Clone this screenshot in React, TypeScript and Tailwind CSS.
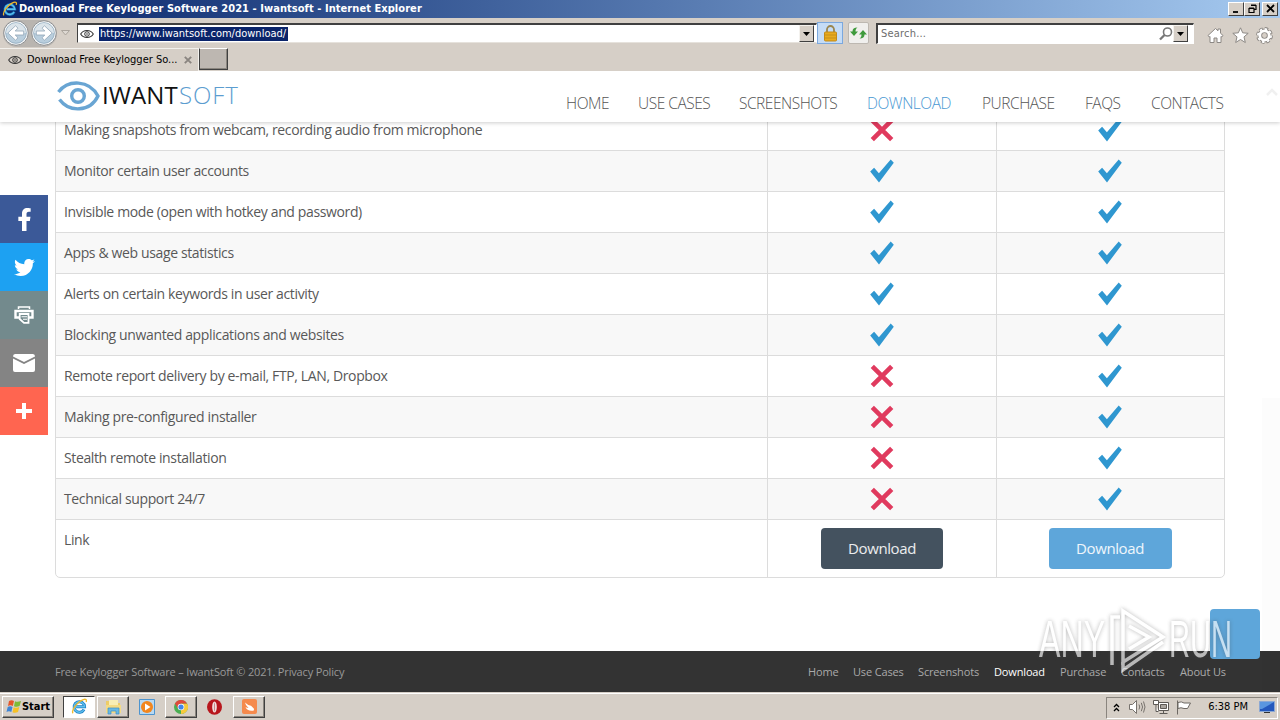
import * as React from "react";
import { FaFacebookF, FaTwitter } from "react-icons/fa";

type Feature = {
  title: string;
  free: boolean;
  pro: boolean;
};

type IconProps = {
  className?: string;
};

const features: Feature[] = [
  { title: "Making snapshots from webcam, recording audio from microphone", free: false, pro: true },
  { title: "Monitor certain user accounts", free: true, pro: true },
  { title: "Invisible mode (open with hotkey and password)", free: true, pro: true },
  { title: "Apps & web usage statistics", free: true, pro: true },
  { title: "Alerts on certain keywords in user activity", free: true, pro: true },
  { title: "Blocking unwanted applications and websites", free: true, pro: true },
  { title: "Remote report delivery by e-mail, FTP, LAN, Dropbox", free: false, pro: true },
  { title: "Making pre-configured installer", free: false, pro: true },
  { title: "Stealth remote installation", free: false, pro: true },
  { title: "Technical support 24/7", free: false, pro: true },
];

const navItems = [
  { label: "HOME", width: "w-[43px]" },
  { label: "USE CASES", width: "w-[72px]" },
  { label: "SCREENSHOTS", width: "w-[99px]" },
  { label: "DOWNLOAD", width: "w-[86px]" },
  { label: "PURCHASE", width: "w-[74px]" },
  { label: "FAQS", width: "w-[37px]" },
  { label: "CONTACTS", width: "w-[74px]" },
];

const footerItems = [
  { label: "Home", width: "w-[30px]" },
  { label: "Use Cases", width: "w-[50px]" },
  { label: "Screenshots", width: "w-[61px]" },
  { label: "Download", width: "w-[51px]" },
  { label: "Purchase", width: "w-[46px]" },
  { label: "Contacts", width: "w-[44px]" },
  { label: "About Us", width: "w-[46px]" },
];

const EyeIcon = ({ className }: IconProps) => (
  <svg className={className} viewBox="0 0 14 10" fill="none" stroke="#333">
    <path d="M.7 5C3.5.3 10.500.3 13.300 5 10.500 9.700 3.500 9.700.7 5Z" strokeWidth="1.100" />
    <circle cx="7" cy="5" r="2.300" />
    <circle cx="7" cy="5" r=".8" fill="#333" stroke="none" />
  </svg>
);

const IeIcon = ({ className }: IconProps) => (
  <svg className={className} viewBox="0 0 20 20" fill="none">
    <path d="M15.300 13.500A6.200 6.200 0 1 1 16 10.300H6" stroke="#1d7fc4" strokeWidth="3.400" />
    <path d="M15.300 13.500A6.200 6.200 0 1 1 16 10.300H6" stroke="#5cc0ee" strokeWidth="1.700" />
    <path d="M2.500 18C-.5 15 8 4 14.500 1.800c3-1 4.200.2 3.300 3" stroke="#f0b92c" strokeWidth="1.600" />
  </svg>
);

const CheckIcon = () => (
  <svg className="block h-6 w-6" viewBox="0 0 24 24">
    <path d="M.2 12.500 4.100 8.800 8.900 14.200 20.700.6 23.800 3.800 9 23.400Z" fill="#2f97d0" />
  </svg>
);

const CrossIcon = () => (
  <svg className="block h-6 w-6" viewBox="0 0 24 24">
    <path d="M2.300 2.300 21.700 21.700M21.700 2.300 2.300 21.700" stroke="#e03a5e" strokeWidth="4.600" />
  </svg>
);

const DropButton = () => (
  <span className="flex h-[17px] w-[15px] items-center justify-center border border-t-[#f4f2ee] border-l-[#f4f2ee] border-r-[#404040] border-b-[#404040] bg-[#d6cfc7]">
    <svg className="h-[4px] w-[7px]" viewBox="0 0 7 4">
      <path d="M0 0h7L3.500 4Z" />
    </svg>
  </span>
);

const NavCircle = ({ flip }: { flip?: boolean }) => (
  <svg className={flip ? "h-[26px] w-[26px] -scale-x-100" : "h-[26px] w-[26px]"} viewBox="0 0 26 26">
    <circle cx="13" cy="13" r="12.300" fill="#f5f7f8" stroke="#8d8f91" />
    <circle cx="13" cy="13" r="10.300" fill="#b9cedd" stroke="#9ab2c4" />
    <path d="M3 13a10 10 0 0 1 20 0Z" fill="#dbe4ea" />
    <path d="M4.800 13 12.500 5.800l2.500 2.400L12.200 11h8.500v4h-8.500l2.800 2.800-2.500 2.400Z" fill="#fff" stroke="#90a5b6" strokeWidth=".8" />
  </svg>
);

function TitleBar() {
  return (
    <div className="flex h-[18px] items-center bg-linear-to-r from-[#0a246a] to-[#a6caf0] pr-[2px] pl-[2px]">
      <IeIcon className="h-4 w-4" />
      <span className="ml-px text-[11px] leading-[18px] font-bold tracking-[0.06px] whitespace-nowrap text-white">
        Download Free Keylogger Software 2021 - Iwantsoft - Internet Explorer
      </span>
      <div className="ml-auto flex">
        {["M3 9h5", "M5 2.500h5v4H8M3 5.500h5v4H3Z M3 5h5M5 2h5", "M3 2 10 9M10 2 3 9"].map((d, i) => (
          <span
            key={d}
            className={`flex h-[14px] w-4 items-center justify-center border border-t-white border-l-white border-r-[#404040] border-b-[#404040] bg-[#d6cfc7] ${i === 2 ? "ml-[2px]" : ""}`}
          >
            <svg className="h-[12px] w-[13px]" viewBox="0 0 13 12">
              <path d={d} fill="none" stroke="#000" strokeWidth={i === 1 ? 1.2 : 1.8} />
            </svg>
          </span>
        ))}
      </div>
    </div>
  );
}

function AddressBar() {
  return (
    <div className="flex h-[30px] items-center pl-[3px]">
      <div className="flex h-[27px] gap-[2px] rounded-full bg-[#b9b5b0]">
        <NavCircle />
        <NavCircle flip />
      </div>
      <svg className="ml-[4px] h-[6px] w-[9px]" viewBox="0 0 9 6">
        <path d="M.5.5h8L4.500 5Z" fill="#ddd8d2" stroke="#aaa49d" />
      </svg>
      <div className="ml-[7px] flex h-[20px] w-[740px] items-center border border-t-2 border-t-[#404040] border-l-[#404040] border-r-white border-b-[#e6e2dc] bg-white pr-[2px] pl-[2px]">
        <EyeIcon className="h-[10px] w-[14px]" />
        <span className="ml-[5px] h-[14px] w-[189px] bg-[#0a246a] pl-px text-[11px] leading-[13px] whitespace-nowrap text-white">
          https://www.iwantsoft.com/download/
        </span>
        <span className="ml-auto">
          <DropButton />
        </span>
      </div>
      <span className="flex h-[22px] w-[26px] items-center justify-center border border-[#7ba8de] bg-[#c5dcf6]">
        <svg className="h-[17px] w-[15px]" viewBox="0 0 15 17">
          <path d="M4 8V4.500a3.500 3.500 0 0 1 7 0V8" fill="none" stroke="#9a8650" strokeWidth="1.800" />
          <rect x="1.500" y="7" width="12" height="9" rx="1" fill="#e8aa1e" stroke="#c38a18" />
          <path d="M2 10h11M2 13h11" stroke="#c5901b" />
        </svg>
      </span>
      <span className="ml-[5px] flex h-[22px] w-[21px] items-center justify-center rounded-[2px] border border-[#bdb8b1] bg-[#f0efed]">
        <svg className="h-[16px] w-[17px]" viewBox="0 0 17 16" fill="#3e9a3c">
          <path d="M4 11 0 6.500h2.500C2.500 4 4 2.500 7.500 2.500 6 3.500 5.500 4.500 5.500 6.500H8Z" />
          <path d="M13 5l4 4.500h-2.500c0 2.500-1.500 4-5 4 1.500-1 2-2 2-4H9Z" />
        </svg>
      </span>
      <div className="ml-[7px] flex h-[21px] w-[318px] items-center border border-t-2 border-t-[#404040] border-l-2 border-l-[#404040] border-r-white border-b-white bg-white pl-[3px]">
        <span className="text-[11px] leading-[14px] tracking-[0.2px] text-[#6d6d6d]">Search...</span>
        <svg className="ml-auto h-[14px] w-[14px]" viewBox="0 0 14 14" fill="none" stroke="#777">
          <circle cx="8.500" cy="5" r="4" strokeWidth="1.600" />
          <path d="M5.500 8 1 12.500" strokeWidth="2.300" />
        </svg>
        <span className="mr-[5px]">
          <DropButton />
        </span>
      </div>
      <div className="mt-[5px] ml-[13px] flex gap-[8px]">
        {[
          "M1 8.500 8.500 1.500l2.500 2.300V2h2.500v4.200L16 8.500 14.700 10 14 9.400V15.500h-4V11H7v4.500H3V9.400L2.300 10Z",
          "M8.500.8l2.200 5 5.500.5-4.200 3.600 1.300 5.600-4.800-3-4.800 3L5 9.900.8 6.300l5.500-.5Z",
        ].map((d) => (
          <svg key={d} className="h-[17px] w-[17px]" viewBox="0 0 17 17">
            <path d={d} fill="#fff" stroke="#8c8884" />
          </svg>
        ))}
        <svg className="-ml-px h-[17px] w-[17px]" viewBox="0 0 17 17" fill="none">
          <circle cx="8.500" cy="8.500" r="6.800" stroke="#8c8884" strokeWidth="3.200" strokeDasharray="3.340 2" />
          <circle cx="8.500" cy="8.500" r="4.700" stroke="#8c8884" strokeWidth="4.600" />
          <circle cx="8.500" cy="8.500" r="6.600" stroke="#fff" strokeWidth="1.700" strokeDasharray="2.500 2.680" />
          <circle cx="8.500" cy="8.500" r="4.700" stroke="#fff" strokeWidth="2.800" />
          <circle cx="8.500" cy="8.500" r="1.700" fill="#d6cfc7" />
        </svg>
      </div>
    </div>
  );
}

function TabRow() {
  return (
    <div className="flex h-[23px]">
      <div className="flex w-[199px] items-center border-t border-r border-t-[#f3f1ed] border-r-[#f3f1ed] pl-[8px]">
        <EyeIcon className="h-[10px] w-[14px]" />
        <span className="ml-[5px] w-[151px] text-[11px] leading-[16px] whitespace-nowrap">Download Free Keylogger So...</span>
        <svg className="ml-[6px] h-[8px] w-[8px]" viewBox="0 0 8 8">
          <path d="M.8.8 7.200 7.200M7.200.8.8 7.200" stroke="#8a8580" strokeWidth="1.900" />
        </svg>
      </div>
      <div className="h-[22px] w-[29px] border-t border-r border-b border-l border-t-white border-r-[#404040] border-b-[#404040] border-l-[#404040] bg-[#bdb7b1] shadow-[inset_-1px_-1px_0_#8a857e]" />
    </div>
  );
}

function SiteHeader() {
  return (
    <header className="relative z-10 flex h-[51px] shrink-0 bg-white pl-[56px] font-['Open_Sans',sans-serif] shadow-[0_1px_4px_rgba(0,0,0,0.2)]">
      <svg className="mt-[10px] h-[30px] w-[44px]" viewBox="0 0 44 30" fill="none" stroke="#69a5d3" strokeWidth="3.400">
        <path d="M2.500 11C12-1.500 33-1.500 42 15 34 31.500 13 31.500 3.500 18.500" />
        <circle cx="22" cy="15" r="6.300" />
      </svg>
      <div className="mt-[7px] ml-[2px] flex text-[24px] leading-[34px] whitespace-nowrap">
        <span className="w-[77px] tracking-[0.1px] text-[#111]">IWANT</span>
        <span className="w-[60px] font-light tracking-[0.9px] text-[#5c9dd0]">SOFT</span>
      </div>
      <nav className="mt-[20px] ml-auto flex gap-[29px] pr-[55px]">
        {navItems.map((item) => (
          <a
            key={item.label}
            className={`text-[15.5px] leading-[24px] font-light tracking-[-0.48px] whitespace-nowrap ${item.width} ${item.label === "DOWNLOAD" ? "text-[#4a98d2]" : "text-[#555]"}`}
          >
            {item.label}
          </a>
        ))}
      </nav>
    </header>
  );
}

function FeatureTable() {
  return (
    <div className="-mt-[13px] ml-[55px] w-[1170px] shrink-0 rounded-b-[5px] border border-[#dcdcdc] font-['Open_Sans',sans-serif] text-[14px] tracking-[-0.37px] text-[#585858]">
      {features.map((feature, i) => (
        <div
          key={feature.title}
          className={`grid h-[41px] grid-cols-[711px_229px_228px] border-b border-[#dcdcdc] ${i % 2 ? "bg-[#f8f8f8]" : "bg-white"}`}
        >
          <div className="flex items-center pb-[2px] pl-[8px]">{feature.title}</div>
          <div className="flex items-center justify-center border-l border-[#dcdcdc]">
            {feature.free ? <CheckIcon /> : <CrossIcon />}
          </div>
          <div className="flex items-center justify-center border-l border-[#dcdcdc] pr-px">
            {feature.pro ? <CheckIcon /> : <CrossIcon />}
          </div>
        </div>
      ))}
      <div className="grid h-[57px] grid-cols-[711px_229px_228px]">
        <div className="pt-[10px] pl-[8px] leading-[20px]">Link</div>
        <div className="flex items-center justify-center border-l border-[#dcdcdc]">
          <button className="h-[41px] w-[122px] rounded-[4px] bg-[#44525f] text-[15px] tracking-[-0.4px] text-white/90">Download</button>
        </div>
        <div className="flex items-center justify-center border-l border-[#dcdcdc] pr-px">
          <button className="h-[41px] w-[123px] rounded-[4px] bg-[#5ea6da] text-[15px] tracking-[-0.4px] text-white/90">Download</button>
        </div>
      </div>
    </div>
  );
}

function ShareBar() {
  return (
    <div className="absolute top-[124px] left-0 z-20 w-[48px] text-white *:flex *:h-[48px] *:items-center *:justify-center">
      <div className="bg-[#3b5998]">
        <FaFacebookF className="h-[23px] w-[23px]" />
      </div>
      <div className="bg-[#1da1f2]">
        <FaTwitter className="h-[21px] w-[21px]" />
      </div>
      <div className="bg-[#738a8d]">
        <svg className="h-[20px] w-[20px]" viewBox="0 0 20 20" fill="none" stroke="#fff">
          <path d="M4.500 4V1.900h11V4" strokeWidth="1.500" />
          <path d="M5 12.500H1.500V6h17v6.500H15" strokeWidth="2.400" />
          <path d="M5.700 9h8.800v8.800H10L5.700 14Z" strokeWidth="1.800" />
          <path d="M7.500 11.800H13M9 14.300H13" strokeWidth="1.100" />
        </svg>
      </div>
      <div className="bg-[#848484]">
        <svg className="h-[20px] w-[22px]" viewBox="0 0 22 20" fill="#fff">
          <path d="M0 3.500Q0 1 2 1h18q2 0 2 2.500L11 9Z" />
          <path d="M0 5.500 11 11l11-5.500V17q0 2-2 2H2q-2 0-2-2Z" />
        </svg>
      </div>
      <div className="bg-[#ff6550]">
        <svg className="h-[16px] w-[16px]" viewBox="0 0 16 16">
          <path d="M8 0v16M0 8h16" stroke="#fff" strokeWidth="4" />
        </svg>
      </div>
    </div>
  );
}

function SiteFooter() {
  return (
    <footer className="mt-auto flex h-[41px] shrink-0 items-center bg-[#333] px-[55px] font-['Open_Sans',sans-serif] text-[11px] leading-[20px] whitespace-nowrap">
      <p className="tracking-[-0.16px] text-[#999]">Free Keylogger Software – IwantSoft © 2021. Privacy Policy</p>
      <div className="-mr-px ml-auto flex gap-[15px]">
        {footerItems.map((item) => (
          <a
            key={item.label}
            className={`tracking-[-0.15px] ${item.width} ${item.label === "Download" ? "text-white" : "text-[#aaa]"}`}
          >
            {item.label}
          </a>
        ))}
      </div>
    </footer>
  );
}

function Watermark() {
  return (
    <div className="absolute top-[532px] left-[1039px] z-30 flex h-[74px] w-[194px] font-['Liberation_Sans_Narrow','Liberation_Sans',sans-serif] text-[51px] leading-[74px] text-white opacity-65 drop-shadow-[0_0_2px_rgba(70,70,70,0.6)]">
      <span className="w-[70px] origin-left scale-x-[.63]">ANY</span>
      <svg className="h-[74px] w-[60px] shrink-0" viewBox="73 0 60 74" fill="none" stroke="#fff" strokeWidth="3.500">
        <path d="M87 8 127 34 87 59Z" />
        <path d="M84 14H76V62M87 59V67L127 39" />
        <path d="M93 23 113 34 93 46" />
      </svg>
      <span className="origin-left scale-x-[.57]">RUN</span>
    </div>
  );
}

const raised =
  "flex h-[22px] items-center justify-center border border-t-white border-l-white border-r-[#404040] border-b-[#404040] shadow-[inset_-1px_-1px_0_#8a857e]";

const WindowsFlag = () => (
  <svg className="h-[15px] w-[16px]" viewBox="0 0 16 15">
    <path d="M3 2q2.500-1.500 5 0L6.800 7Q4.500 5.500 2 7Z" fill="#e5562a" />
    <path d="M9 2.300q2.500 1.200 6-.3L13.600 7q-3 1.400-5.600.2Z" fill="#7dbb36" />
    <path d="M1.700 8q2.500-1.500 4.800 0L5.300 13Q3 11.500.5 13Z" fill="#3f85d6" />
    <path d="M7.700 8.300q2.500 1.200 5.600-.2L12 13q-3 1.400-5.500.2Z" fill="#f6c126" />
  </svg>
);

function Taskbar() {
  return (
    <div className="flex h-[28px] items-center border-t border-[#d6cfc7] pl-[2px] shadow-[inset_0_1px_0_#fff]">
      <div className={`${raised} w-[52px]`}>
        <WindowsFlag />
        <span className="text-[11px] leading-[16px] font-bold">Start</span>
      </div>
      <div className="ml-[9px] flex h-[22px] w-[32px] items-center justify-center border border-t-[#404040] border-l-[#404040] border-r-white border-b-white bg-white">
        <IeIcon className="h-[17px] w-[17px]" />
      </div>
      <div className={`${raised} ml-[2px] w-[32px]`}>
        <svg className="h-[16px] w-[17px]" viewBox="0 0 17 16">
          <path d="M1 2h6l1 2h7v10H1Z" fill="#edcc68" />
          <path d="M4 1h9v6H4Z" fill="#f9eeb4" />
          <path d="M1 6h15v8H1Z" fill="#f4db84" />
          <path d="M3 15V9h11v6h-3v-3H6v3Z" fill="#68b8e4" stroke="#3c8fc4" strokeWidth=".7" />
        </svg>
      </div>
      <svg className="ml-[10px] h-[16px] w-[16px]" viewBox="0 0 16 16">
        <path d="M.5.500h15v15H.5Z" fill="#b8d9f2" stroke="#4d94cf" />
        <circle cx="8" cy="8" r="6" fill="#f2861e" />
        <path d="m6 4.500 5.500 3.500L6 11.500Z" fill="#fff" />
      </svg>
      <div className={`${raised} ml-[10px] w-[32px]`}>
        <svg className="h-[14px] w-[14px]" viewBox="0 0 14 14">
          <circle cx="7" cy="7" r="7" fill="#4aae52" />
          <path d="M7 7V3.500h6.100A7 7 0 0 1 7 14Z" fill="#f7ca3c" />
          <path d="M.9 3.500A7 7 0 0 1 13.100 3.500H7L4 8.500Z" fill="#df4a3c" />
          <circle cx="7" cy="7" r="3.300" fill="#fff" />
          <circle cx="7" cy="7" r="2.600" fill="#4286ea" />
        </svg>
      </div>
      <svg className="ml-[10px] h-[16px] w-[15px]" viewBox="0 0 15 16">
        <ellipse cx="7.500" cy="8" rx="7.500" ry="7.800" fill="#b8161c" />
        <ellipse cx="7.500" cy="8" rx="2.300" ry="5.500" fill="#f3e5e2" />
        <ellipse cx="7.500" cy="8" rx=".6" ry="4.500" fill="#c98a8a" />
      </svg>
      <div className={`${raised} ml-[11px] w-[32px]`}>
        <svg className="h-[15px] w-[15px]" viewBox="0 0 15 15">
          <rect width="15" height="15" rx="2" fill="#f58a4d" />
          <path d="M3 3.500q3 3 6 3.200l2.800 2.800q.8 2.500-1.800 2.300Q5 12 3.500 8 5 9 6.500 9 3.500 6.500 3 3.500Z" fill="#fff" />
        </svg>
      </div>
      <div className="mt-[2px] mr-[2px] ml-auto flex h-[22px] w-[172px] items-center border border-t-[#8a857e] border-l-[#8a857e] border-r-white border-b-white pr-[2px] pb-px pl-[6px]">
        <svg className="h-[9px] w-[7px]" viewBox="0 0 7 9" fill="none" stroke="#000" strokeWidth="1.300">
          <path d="M1 4 3.500 1.500 6 4M1 8 3.500 5.500 6 8" />
        </svg>
        <svg className="ml-[9px] h-[16px] w-[17px]" viewBox="0 0 17 16" fill="none" stroke="#77726d">
          <path d="M.5 5.500h3l4-4v13l-4-4h-3Z" fill="#fff" />
          <path d="M10 5.500q1.500 2.500 0 5M12.300 3.800q2.500 4.200 0 8.400M14.500 2.500q3 5.500 0 11" />
        </svg>
        <svg className="ml-[7px] h-[16px] w-[16px]" viewBox="0 0 16 16" fill="#fff" stroke="#5d5955">
          <path d="M5.500 3.500h10v8h-10Z" />
          <path d="M7.500 5.500h6v4h-6Z" fill="#aaa59f" />
          <path d="M6.500 14.500h8M10.500 12v2" />
          <path d="M.5 1.500h5v4h-5ZM3 6v6.500h2.500" />
        </svg>
        <svg className="ml-[7px] h-[15px] w-[16px]" viewBox="0 0 16 15" fill="#fff" stroke="#6d6863">
          <path d="M1.500.500v14" />
          <path d="M2 2.500q3.500-1.500 6 .5h6.500l-3 5.500H8q-3-1.500-6 0Z" />
        </svg>
        <span className="ml-auto text-[11px] leading-[16px] whitespace-nowrap">6:38 PM</span>
        <svg className="ml-[11px] h-[14px] w-[16px]" viewBox="0 0 16 14">
          <path d="M.5 1.500h15v10H.5Z" fill="#2458bd" stroke="#8ba8d4" />
          <path d="M1 2h14L3 9H1Z" fill="#5a96e0" />
          <path d="M5 12.500h6" stroke="#333" />
        </svg>
      </div>
    </div>
  );
}

export default function App() {
  return (
    <div className="flex h-[720px] w-[1280px] flex-col overflow-hidden bg-[#d6cfc7] font-['DejaVu_Sans_Condensed','DejaVu_Sans',sans-serif]">
      <TitleBar />
      <AddressBar />
      <TabRow />
      <main className="relative flex h-[621px] flex-col overflow-hidden bg-white">
        <SiteHeader />
        <FeatureTable />
        <ShareBar />
        <div className="absolute top-[327px] right-0 h-[294px] w-[18px] bg-black/[0.012]" />
        <svg className="absolute top-[17px] right-[2px] z-20 h-[8px] w-[12px]" viewBox="0 0 12 8">
          <path d="M1 7 6 2l5 5" fill="none" stroke="#f0f0f0" strokeWidth="2.500" />
        </svg>
        <div className="absolute right-[20px] bottom-[33px] z-20 h-[50px] w-[50px] rounded-[4px] bg-[#5ea6da]" />
        <Watermark />
        <SiteFooter />
      </main>
      <Taskbar />
    </div>
  );
}
